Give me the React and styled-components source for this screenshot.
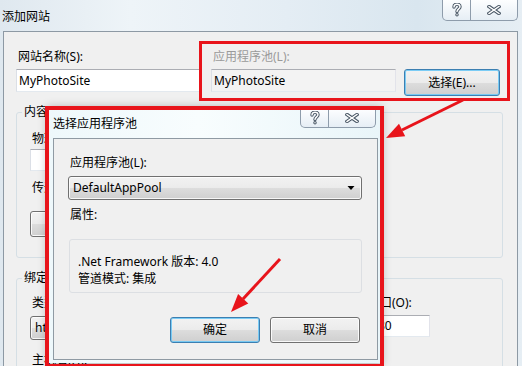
import React from 'react';
import styled, { createGlobalStyle } from 'styled-components';

const RED = '#e8141b';

const Global = createGlobalStyle`
  html, body { margin: 0; padding: 0; }
  body {
    width: 522px; height: 366px; overflow: hidden;
    background: #dfe9f2;
    font-family: "Noto Sans", "Noto Sans CJK SC", sans-serif;
    font-size: 12px; color: #000;
  }
  * { box-sizing: border-box; }
`;

const Window = styled.div`
  position: relative;
  width: 522px; height: 366px; overflow: hidden;
  display: flex; flex-direction: column;
  background: linear-gradient(90deg, #dfe8ef 0%, #eef4f8 25%, #e4edf4 55%, #d9e6ef 80%, #e6eef4 100%);
`;

const TitleBar = styled.div`
  height: 31px; flex: none;
  display: flex; align-items: flex-start;
`;

const TitleText = styled.div`
  margin-top: ${p => p.$top}px;
  padding-left: ${p => p.$left}px;
  line-height: 16px;
  white-space: nowrap;
`;

const CaptionGroup = styled.div`
  margin-left: auto; margin-right: ${p => p.$right}px;
  height: ${p => p.$h}px;
  display: flex;
  border: 1px solid #8e9cab; border-top: none;
  border-radius: 0 0 5px 5px;
  background: linear-gradient(#fdfeff, #e6eef5);
  overflow: hidden;
`;

const CapBtn = styled.div`
  width: ${p => p.$w}px;
  display: flex; align-items: center; justify-content: center;
  & + & { border-left: 1px solid #8e9cab; }
`;

const Client = styled.div`
  flex: 1;
  margin: 0 4px 0 3px;
  border: 1px solid #8d99a4; border-bottom: none;
  background: #f0f0f0;
  padding: 17px 14px 0 12px;
  display: flex; flex-direction: column;
`;

const TopRow = styled.div`
  display: grid;
  grid-template-columns: 184px 1fr;
  column-gap: 11px;
`;

const Field = styled.div`
  display: flex; flex-direction: column;
  gap: ${p => p.$gap ?? 4}px;
`;

const Label = styled.div`
  line-height: 16px; padding-left: 2px; white-space: nowrap;
  color: ${p => (p.$disabled ? '#9a9a9a' : '#000')};
`;

const InputRow = styled.div`
  display: flex; align-items: flex-start; gap: 8px;
`;

const TextBox = styled.div`
  width: ${p => (p.$w ? `${p.$w}px` : '100%')};
  height: ${p => p.$h ?? 23}px;
  border: 1px solid;
  border-color: #abadb3 #e2e3ea #e3e9ef #dbdfe6;
  background: ${p => (p.$readonly ? '#f3f3f3' : '#fff')};
  padding-left: ${p => p.$pl ?? 2}px;
  line-height: ${p => (p.$h ?? 23) - 2}px;
  white-space: nowrap; overflow: hidden;
`;

const Button = styled.div`
  width: ${p => p.$w}px; height: ${p => p.$h ?? 26}px; flex: none;
  border: 1px solid ${p => (p.$default ? '#3c7fb1' : '#707070')};
  border-radius: 3px;
  background: linear-gradient(#f2f2f2 0%, #ebebeb 50%, #dddddd 50%, #cfcfcf 100%);
  box-shadow: inset 0 0 0 1px ${p => (p.$default ? 'rgba(110,200,245,0.9)' : 'rgba(255,255,255,0.85)')};
  display: flex; align-items: center; justify-content: center;
  line-height: 16px; white-space: nowrap;
`;

const Group = styled.fieldset`
  margin: ${p => p.$mt}px 0 0;
  padding: ${p => p.$pt}px 12px 0 13px;
  border: 1px solid #d5dfe5; border-radius: 3px;
  min-width: 0;
  height: ${p => p.$h}px;
  display: flex; flex-direction: column;
`;

const Legend = styled.legend`
  padding: 0 2px; margin-left: -8px;
  line-height: 16px;
`;

const Stack = styled.div`
  display: flex; flex-direction: column;
  margin-top: ${p => p.$mt ?? 0}px;
  gap: ${p => p.$gap ?? 0}px;
`;

const BindRow = styled.div`
  display: flex; gap: 10px;
`;

const Select = styled.div`
  width: ${p => (p.$w ? `${p.$w}px` : '100%')};
  height: 24px;
  border: 1px solid #707070; border-radius: 3px;
  background: linear-gradient(#f2f2f2 0%, #ebebeb 50%, #dddddd 50%, #cfcfcf 100%);
  box-shadow: inset 0 0 0 1px rgba(255,255,255,0.8);
  display: flex; align-items: center; justify-content: space-between;
  padding: 0 6px 0 4px;
  line-height: 16px; white-space: nowrap;
`;

const Caret = () => (
  <svg width="8" height="6" viewBox="0 0 8 6">
    <path d="M0.5 1 L7.5 1 L4 5 Z" fill="#000" />
  </svg>
);

const HelpIcon = () => (
  <svg width="10" height="14" viewBox="0 0 10 14">
    <g fill="none" strokeLinecap="round">
      <path d="M2 4 C2 2 3.3 1.3 5 1.3 C6.8 1.3 8 2.3 8 3.8 C8 5.8 5 6 5 8.6" stroke="#4a5866" strokeWidth="3.4" />
      <path d="M5 11.6 L5 11.7" stroke="#4a5866" strokeWidth="3.4" />
      <path d="M2 4 C2 2 3.3 1.3 5 1.3 C6.8 1.3 8 2.3 8 3.8 C8 5.8 5 6 5 8.6" stroke="#fff" strokeWidth="1.4" />
      <path d="M5 11.6 L5 11.7" stroke="#fff" strokeWidth="1.4" />
    </g>
  </svg>
);

const CloseIcon = () => (
  <svg width="14" height="10" viewBox="0 0 14 10">
    <g fill="none" strokeLinecap="square">
      <path d="M2 1.5 L12 8.5 M12 1.5 L2 8.5" stroke="#4a5866" strokeWidth="3.4" />
      <path d="M2 1.5 L12 8.5 M12 1.5 L2 8.5" stroke="#fff" strokeWidth="1.4" />
    </g>
  </svg>
);

const Dialog = styled.div`
  position: absolute; left: 49px; top: 109px;
  width: 331px; height: 254px;
  display: flex; flex-direction: column;
  background: linear-gradient(90deg, #eef8fb 0%, #f8fdfe 45%, #e9f5f9 100%);
  box-shadow: 0 0 9px 2px rgba(0,0,0,0.28);
`;

const DialogTitle = styled.div`
  height: 29px; flex: none;
  display: flex; align-items: flex-start;
`;

const DialogClient = styled.div`
  flex: 1;
  margin: 0 2px 3px 4px;
  border: 1px solid #8f9aa3;
  background: #f0f0f0;
  padding: 16px 15px 0 14px;
  display: flex; flex-direction: column;
`;

const PropsBox = styled.div`
  margin: 16px 0 0 1px;
  height: 54px;
  border: 1px solid #dcdfe3; border-radius: 3px;
  padding: 13px 8px 0 8px;
  display: flex; flex-direction: column;
`;

const PropLine = styled.div`
  line-height: 17px; white-space: nowrap;
`;

const ButtonBar = styled.div`
  margin-top: 24px;
  display: flex; justify-content: flex-end; gap: 10px;
  padding-right: 2px;
`;

const Annotation = styled.div`
  position: absolute;
  left: ${p => p.$x}px; top: ${p => p.$y}px;
  width: ${p => p.$w}px; height: ${p => p.$h}px;
  border: ${p => p.$t}px solid ${RED};
  pointer-events: none;
`;

const Overlay = styled.svg`
  position: absolute; left: 0; top: 0;
  pointer-events: none;
`;

export default function App() {
  return (
    <>
      <Global />
      <Window>
        <TitleBar>
          <TitleText $top={9} $left={2}>添加网站</TitleText>
          <CaptionGroup $right={4} $h={21}>
            <CapBtn $w={27}><HelpIcon /></CapBtn>
            <CapBtn $w={47}><CloseIcon /></CapBtn>
          </CaptionGroup>
        </TitleBar>
        <Client>
          <TopRow>
            <Field>
              <Label>网站名称(S):</Label>
              <TextBox>MyPhotoSite</TextBox>
            </Field>
            <Field>
              <Label $disabled>应用程序池(L):</Label>
              <InputRow>
                <TextBox $w={185} $readonly>MyPhotoSite</TextBox>
                <Button $w={96} $h={27} $default>选择(E)...</Button>
              </InputRow>
            </Field>
          </TopRow>

          <Group $mt={8} $pt={11} $h={154}>
            <Legend>内容目录</Legend>
            <Field $gap={2}>
              <Label>物理路径(P):</Label>
              <TextBox $w={330} $h={22}></TextBox>
            </Field>
            <Stack $mt={9} $gap={15}>
              <Label>传递身份验证</Label>
              <InputRow>
                <Button $w={96}>连接为(C)...</Button>
                <Button $w={96}>测试设置(G)...</Button>
              </InputRow>
            </Stack>
          </Group>

          <Group $mt={12} $pt={9} $h={140}>
            <Legend>绑定</Legend>
            <BindRow>
              <Field $gap={5}>
                <Label>类型(T):</Label>
                <Select $w={100}>http<Caret /></Select>
              </Field>
              <Field $gap={5}>
                <Label>IP 地址(I):</Label>
                <Select $w={216}>全部未分配<Caret /></Select>
              </Field>
              <Field $gap={4}>
                <Label>端口(O):</Label>
                <TextBox $w={64} $h={22} $pl={11}>80</TextBox>
              </Field>
            </BindRow>
            <Stack $mt={12}>
              <Label>主机名(H):</Label>
            </Stack>
          </Group>
        </Client>

        <Dialog>
          <DialogTitle>
            <TitleText $top={7} $left={4}>选择应用程序池</TitleText>
            <CaptionGroup $right={4} $h={19}>
              <CapBtn $w={27}><HelpIcon /></CapBtn>
              <CapBtn $w={47}><CloseIcon /></CapBtn>
            </CaptionGroup>
          </DialogTitle>
          <DialogClient>
            <Field $gap={5}>
              <Label>应用程序池(L):</Label>
              <Select>DefaultAppPool<Caret /></Select>
            </Field>
            <Stack $mt={7}>
              <Label>属性:</Label>
            </Stack>
            <PropsBox>
              <PropLine>.Net Framework 版本: 4.0</PropLine>
              <PropLine>管道模式: 集成</PropLine>
            </PropsBox>
            <ButtonBar>
              <Button $w={90} $default>确定</Button>
              <Button $w={90}>取消</Button>
            </ButtonBar>
          </DialogClient>
        </Dialog>

        <Annotation $x={199} $y={41} $w={311} $h={60} $t={3} />
        <Annotation $x={45} $y={106} $w={339} $h={262} $t={4} />

        <Overlay width="522" height="366" viewBox="0 0 522 366">
          <line x1="463" y1="100" x2="402" y2="130" stroke={RED} strokeWidth="3" />
          <polygon points="386,138 405.2,136.3 399,123.7" fill={RED} />
          <line x1="280" y1="259" x2="243" y2="299" stroke={RED} strokeWidth="3" />
          <polygon points="231,312 248.3,303.6 238.1,294" fill={RED} />
        </Overlay>
      </Window>
    </>
  );
}
